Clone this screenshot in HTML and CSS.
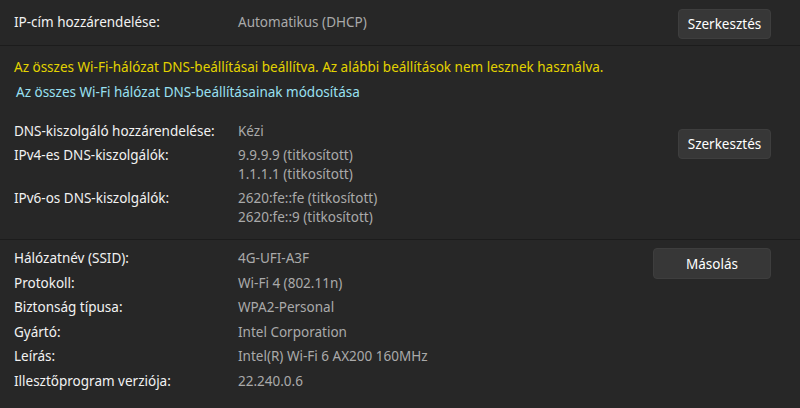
FILE: index.html
```html
<!DOCTYPE html>
<html lang="hu">
<head>
<meta charset="utf-8">
<link rel="stylesheet" href="styles.css">
</head>
<body>
<div class="page">
  <section class="sec sec1">
    <div class="grid">
      <div class="lbl">IP-cím hozzárendelése:</div>
      <div class="val">Automatikus (DHCP)</div>
    </div>
    <button class="btn">Szerkesztés</button>
  </section>
  <section class="sec sec2">
    <div class="main">
      <div class="warn">Az összes Wi-Fi-hálózat DNS-beállításai beállítva. Az alábbi beállítások nem lesznek használva.</div>
      <div class="link">Az összes Wi-Fi hálózat DNS-beállításainak módosítása</div>
      <div class="dnsrow">
        <div class="grid">
          <div class="lbl">DNS-kiszolgáló hozzárendelése:</div>
          <div class="val">Kézi</div>
          <div class="lbl">IPv4-es DNS-kiszolgálók:</div>
          <div class="val">9.9.9.9 (titkosított)<br>1.1.1.1 (titkosított)</div>
          <div class="lbl">IPv6-os DNS-kiszolgálók:</div>
          <div class="val">2620:fe::fe (titkosított)<br>2620:fe::9 (titkosított)</div>
        </div>
        <button class="btn btn-dns">Szerkesztés</button>
      </div>
    </div>
  </section>
  <section class="sec sec3">
    <div class="grid">
      <div class="lbl">Hálózatnév (SSID):</div>
      <div class="val">4G-UFI-A3F</div>
      <div class="lbl">Protokoll:</div>
      <div class="val">Wi-Fi 4 (802.11n)</div>
      <div class="lbl">Biztonság típusa:</div>
      <div class="val">WPA2-Personal</div>
      <div class="lbl">Gyártó:</div>
      <div class="val">Intel Corporation</div>
      <div class="lbl">Leírás:</div>
      <div class="val">Intel(R) Wi-Fi 6 AX200 160MHz</div>
      <div class="lbl">Illesztőprogram verziója:</div>
      <div class="val">22.240.0.6</div>
    </div>
    <button class="btn btn-copy">Másolás</button>
  </section>
</div>
</body>
</html>
```
FILE: styles.css
```css
html, body {
  margin: 0;
  padding: 0;
  background: #272727;
}
body {
  width: 800px;
  height: 408px;
  overflow: hidden;
  font-family: "Noto Sans", "Open Sans", sans-serif;
  font-size: 13.5px;
  line-height: 19px;
  color: #ffffff;
}
.sec {
  display: flex;
  justify-content: space-between;
  align-items: flex-start;
  padding-left: 14px;
  padding-right: 29px;
  border-bottom: 1px solid #1c1c1c;
}
.sec1 {
  height: 46px;
  align-items: center;
  box-sizing: border-box;
}
.sec2 {
  padding-top: 12px;
  padding-bottom: 12px;
}
.sec3 {
  border-bottom: none;
  padding-top: 9px;
}
.main { flex: 1; }
.grid {
  display: grid;
  grid-template-columns: 224px auto;
  row-gap: 5px;
}
.sec3 .grid { row-gap: 5.6px; }
.lbl { color: #f2f2f2; }
.val { color: #aaaaaa; }
.warn { color: #e3d300; }
.link {
  color: #99e0f2;
  margin-top: 6px;
  padding-left: 2px;
}
.dnsrow {
  display: flex;
  justify-content: space-between;
  align-items: flex-start;
  margin-top: 20px;
}
.btn {
  font-family: inherit;
  font-size: 13.5px;
  color: #ffffff;
  background: #373737;
  border: 1px solid #3e3e3e;
  border-radius: 4px;
  height: 30px;
  width: 93px;
  padding: 0;
  line-height: 28px;
}
.sec1 .btn { margin-top: 2px; }
.btn-dns { margin-top: 7px; }
.btn-copy {
  width: 118px;
  height: 31px;
  margin-top: -1px;
}
```
